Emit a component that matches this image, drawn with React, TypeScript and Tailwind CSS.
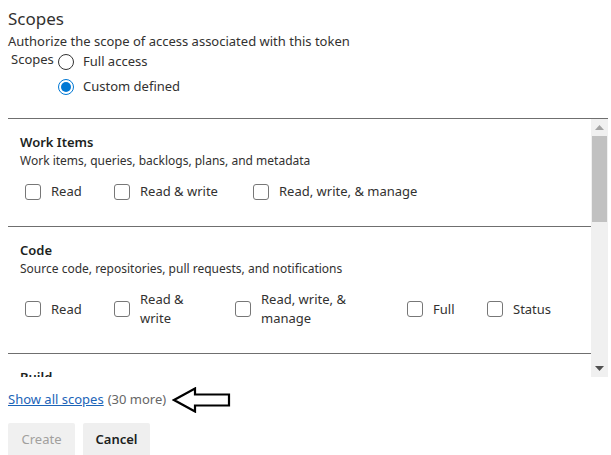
import React, { useState } from "react";

interface ScopeOption {
  label: string;
  itemClass: string;
  labelClass?: string;
}

interface ScopeGroup {
  title: string;
  description: string;
  sectionClass: string;
  options: ScopeOption[];
}

const groups: ScopeGroup[] = [
  {
    title: "Work Items",
    description: "Work items, queries, backlogs, plans, and metadata",
    sectionClass: "h-[108px]",
    options: [
      { label: "Read", itemClass: "w-[89px]" },
      { label: "Read & write", itemClass: "w-[139px]" },
      { label: "Read, write, & manage", itemClass: "" },
    ],
  },
  {
    title: "Code",
    description: "Source code, repositories, pull requests, and notifications",
    sectionClass: "h-[127px]",
    options: [
      { label: "Read", itemClass: "w-[89px]" },
      { label: "Read & write", itemClass: "w-[121px]", labelClass: "w-[56px]" },
      { label: "Read, write, & manage", itemClass: "w-[172px]", labelClass: "w-[100px]" },
      { label: "Full", itemClass: "w-[80px]" },
      { label: "Status", itemClass: "" },
    ],
  },
  {
    title: "Build",
    description: "Artifacts, definitions, requests, queue a build, and update build properties",
    sectionClass: "h-[108px]",
    options: [],
  },
];

function Checkbox({ option }: { option: ScopeOption }) {
  const [checked, setChecked] = useState(false);
  return (
    <label className={`flex items-center gap-[10px] shrink-0 cursor-pointer ${option.itemClass}`}>
      <span
        onClick={() => setChecked(!checked)}
        className={`w-4 h-4 shrink-0 rounded-[3px] border ${checked ? "bg-[#0078d4] border-[#0078d4]" : "border-[#777] bg-white"}`}
      />
      <span className={`text-[13px] leading-[19px] text-[#323130] ${option.labelClass ?? ""}`}>{option.label}</span>
    </label>
  );
}

function Radio({ label, checked, onClick }: { label: string; checked: boolean; onClick: () => void }) {
  return (
    <div className="flex items-center gap-[9px] h-[25px] cursor-pointer" onClick={onClick}>
      {checked ? (
        <span className="w-4 h-4 rounded-full border border-[#0078d4] flex items-center justify-center">
          <span className="w-[10px] h-[10px] rounded-full bg-[#0078d4]" />
        </span>
      ) : (
        <span className="w-4 h-4 rounded-full border border-[#333]" />
      )}
      <span className="text-[13px] text-[#323130]">{label}</span>
    </div>
  );
}

export default function App() {
  const [mode, setMode] = useState<"full" | "custom">("custom");

  return (
    <div className="w-[611px] h-[455px] overflow-hidden bg-white pl-2 pr-[3px] pt-[7px] font-['Noto_Sans','Liberation_Sans',sans-serif] text-[#323130]">
      <div className="text-[17px] leading-[24px]">Scopes</div>
      <div className="text-[13px] leading-[18px] mt-[1px]">Authorize the scope of access associated with this token</div>

      {/* Scope mode */}
      <div className="flex items-start -mt-[1px]">
        <div className="text-[13px] leading-[18px] pl-[3px] w-[50px] pt-[1px]">Scopes</div>
        <div className="flex flex-col">
          <Radio label="Full access" checked={mode === "full"} onClick={() => setMode("full")} />
          <Radio label="Custom defined" checked={mode === "custom"} onClick={() => setMode("custom")} />
        </div>
      </div>

      {/* Scope list */}
      <div className="mt-[19px] border-t border-[#6f6f6f] h-[259px] flex">
        <div className="flex-1 overflow-hidden">
          {groups.map((g) => (
            <div key={g.title} className={`border-b border-[#6f6f6f] px-3 pt-[14px] shrink-0 ${g.sectionClass}`}>
              <div className="text-[13px] leading-[18px] font-semibold text-[#201f1e]">{g.title}</div>
              <div className="text-[12px] leading-[18px] mt-[1px]">{g.description}</div>
              <div className="flex items-center pl-[5px] mt-[12px]">
                {g.options.map((o) => (
                  <Checkbox key={o.label} option={o} />
                ))}
              </div>
            </div>
          ))}
        </div>

        {/* scrollbar */}
        <div className="w-[17px] bg-[#f0f0f0] flex flex-col items-center">
          <div className="h-[17px] flex items-center justify-center">
            <svg width="9" height="5" viewBox="0 0 9 5"><path d="M0 5 L4.5 0 L9 5 Z" fill="#a3a3a3" /></svg>
          </div>
          <div className="w-[15px] h-[86px] bg-[#c1c1c1]" />
          <div className="flex-1" />
          <div className="h-[17px] flex items-center justify-center">
            <svg width="9" height="5" viewBox="0 0 9 5"><path d="M0 0 L9 0 L4.5 5 Z" fill="#505050" /></svg>
          </div>
        </div>
      </div>

      <div className="flex items-center mt-[8px] h-[30px] text-[13px]">
        <a href="#" className="text-[#1b64b8] underline">Show all scopes</a>
        <span className="ml-1 text-[#666]">(30 more)</span>
        <svg className="ml-[6px] shrink-0" width="60" height="26" viewBox="0 0 60 26">
          <path d="M2 13 L23 1.5 L23 7.5 L57 7.5 L57 18.5 L23 18.5 L23 24.5 Z" fill="white" stroke="black" strokeWidth="2.2" strokeLinejoin="miter" />
        </svg>
      </div>

      <div className="flex gap-2 mt-[8px]">
        <button disabled className="w-[67px] h-[34px] rounded-[2px] bg-[#f0f0f0] text-[13px] text-[#a19f9d]">Create</button>
        <button className="w-[67px] h-[34px] rounded-[2px] bg-[#efefef] text-[13px] font-semibold text-[#201f1e]">Cancel</button>
      </div>
    </div>
  );
}
